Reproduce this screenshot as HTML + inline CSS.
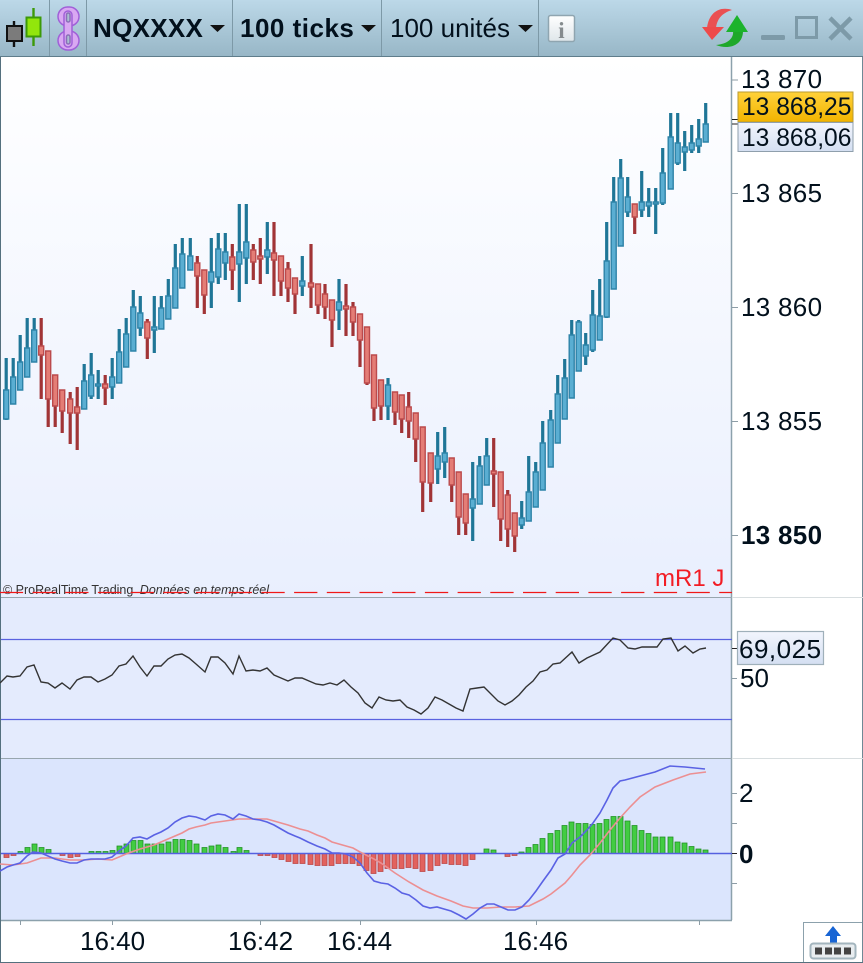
<!DOCTYPE html>
<html><head><meta charset="utf-8"><title>NQXXXX</title>
<style>
html,body{margin:0;padding:0;background:#fff;}
svg{display:block;}
text{font-family:"Liberation Sans",sans-serif;}
</style></head>
<body>
<svg xmlns="http://www.w3.org/2000/svg" width="863" height="963" viewBox="0 0 863 963">
<defs>
<linearGradient id="tb" x1="0" y1="0" x2="0" y2="1"><stop offset="0" stop-color="#bcd8e8"/><stop offset="1" stop-color="#98b7c7"/></linearGradient>
<linearGradient id="pc" x1="0" y1="0" x2="0" y2="1"><stop offset="0" stop-color="#ffffff"/><stop offset="1" stop-color="#e9effe"/></linearGradient>
<linearGradient id="ye" x1="0" y1="0" x2="0" y2="1"><stop offset="0" stop-color="#ffd23a"/><stop offset="1" stop-color="#f2b400"/></linearGradient>
<linearGradient id="bl" x1="0" y1="0" x2="0" y2="1"><stop offset="0" stop-color="#f2f5fd"/><stop offset="1" stop-color="#d4dff2"/></linearGradient>
<linearGradient id="in" x1="0" y1="0" x2="0" y2="1"><stop offset="0" stop-color="#ffffff"/><stop offset="1" stop-color="#dfe6ea"/></linearGradient>
</defs>
<rect width="863" height="963" fill="#fff"/>
<!-- chart panels -->
<rect x="1" y="57" width="731" height="540" fill="url(#pc)"/>
<rect x="1" y="597" width="731" height="162" fill="#e4ebfd"/>
<rect x="1" y="759" width="731" height="161" fill="#dbe5fd"/>
<!-- toolbar -->
<rect x="0" y="0" width="863" height="56" fill="url(#tb)"/>
<rect x="0" y="56" width="863" height="1" fill="#5f7d8b"/>
<path d="M49.5 0V56M86.5 0V56M232.5 0V56M381.5 0V56M538.5 0V56" stroke="#7d99a7" stroke-width="1"/>
<!-- candle icon -->
<path d="M14 21V47" stroke="#111" stroke-width="2.4"/>
<rect x="7" y="26" width="15" height="15" fill="#7b7b7b" stroke="#111" stroke-width="2"/>
<path d="M33.5 8V46" stroke="#3c9a08" stroke-width="2.4"/>
<rect x="26.5" y="17.5" width="14" height="19" fill="#92e60c" stroke="#3c9a08" stroke-width="2"/>
<!-- link icon -->
<g fill="none" stroke="#a060d8" stroke-width="1.5">
<rect x="58" y="7" width="21" height="19" rx="9.5" fill="#d9a8f2"/>
<rect x="58" y="31" width="21" height="19" rx="9.5" fill="#d9a8f2"/>
<rect x="64" y="11" width="8" height="36" rx="4" fill="#d9a8f2"/>
<rect x="66.5" y="13" width="3.5" height="9" rx="1.7" fill="#a9bfd0" stroke="#8a70b8"/>
<rect x="66.5" y="35" width="3.5" height="9" rx="1.7" fill="#a9bfd0" stroke="#8a70b8"/>
</g>
<!-- toolbar text -->
<text x="93" y="37" font-size="26" font-weight="bold" fill="#02101c" letter-spacing="0.3">NQXXXX</text>
<path d="M210 25h15l-7.5 7z" fill="#111"/>
<text x="240" y="37" font-size="26" font-weight="bold" fill="#02101c" letter-spacing="0.5">100 ticks</text>
<path d="M361 25h15l-7.5 7z" fill="#111"/>
<text x="390" y="37" font-size="26" fill="#02101c">100 unités</text>
<path d="M518 25h15l-7.5 7z" fill="#111"/>
<!-- info -->
<rect x="548.5" y="15.5" width="26" height="26" rx="2" fill="url(#in)" stroke="#8fa5b0" stroke-width="1.5"/>
<text x="561.5" y="38" font-size="23" font-weight="bold" text-anchor="middle" style="font-family:'Liberation Serif',serif" fill="#858b8e">i</text>
<!-- refresh -->
<path d="M732 10C720 6 709 12 707 28H716C717 19 722 13 732 10z" fill="#ea5052"/>
<path d="M702 27H724L712 40z" fill="#ee4a4a"/>
<path d="M716 45C728 50 743 46 743 31H733C734 38 728 44 716 45z" fill="#1ea82a"/>
<path d="M726 32H748L737 15z" fill="#1cb32c"/>
<!-- window controls -->
<rect x="761" y="35" width="24" height="5" rx="1.5" fill="#7d9aa8"/>
<rect x="796.5" y="17.5" width="20" height="20" fill="none" stroke="#7d9aa8" stroke-width="3"/>
<path d="M830 18L851 39M851 18L830 39" stroke="#7d9aa8" stroke-width="4.5"/>
<!-- window/panel lines -->
<path d="M0.5 57V963" stroke="#54707e" stroke-width="1"/>
<path d="M862.5 57V963" stroke="#6f8895" stroke-width="1"/>
<path d="M0 962.5H863" stroke="#54707e" stroke-width="1"/>
<path d="M731.5 57V920" stroke="#8ca1ac" stroke-width="1.5"/>
<path d="M1 597.5H732" stroke="#98a6ae" stroke-width="1"/>
<path d="M732 597.5H863" stroke="#d8dee0" stroke-width="1"/>
<path d="M1 758.5H732" stroke="#98a6ae" stroke-width="1"/>
<path d="M732 758.5H863" stroke="#d8dee0" stroke-width="1"/>
<path d="M1 920.5H732" stroke="#8ca1ac" stroke-width="1.5"/>
<!-- price axis ticks -->
<path d="M732 80H738M732 193.5H738M732 307.5H738M732 421.5H738M732 535.5H738M732 678.5H737M732 793.5H737M732 823.5H737M732 883.5H737" stroke="#8d9da6" stroke-width="1"/>
<path d="M732 119.5H738M732 124H738M732 648.5H737M732 853.5H737" stroke="#222" stroke-width="1"/>
<path d="M20.5 921V925M112.5 921V925M260.5 921V925M360.5 921V925M536.5 921V925M699.5 921V925" stroke="#8d9da6" stroke-width="1"/>
<!-- blue wicks -->
<path fill="none" stroke="#1f7697" stroke-width="3.2" d="M6.2 358V420M13.2 358V404M20.2 335V390M27.2 318V377M34.2 318V362M84.2 364V409M91.2 353V399M98.2 370V399M112.2 358V399M119.2 329V383M126.2 318V367M133.3 290V351M140.3 296V336M154.3 296V353M161.3 296V329M168.3 279V319M175.3 244V308M182.3 238V288M190.3 238V270M211.3 238V308M218.3 233V284M225.3 233V280M239.3 204V302M246.3 204V284M267.3 222V274M302.3 256V296M339 279V330M388 378V420M437.7 432V484M444.7 427V478M472.7 462V541M479.7 456V504M486.7 438V485M521.7 501V529M528.7 456V521M535.7 462V507M542.7 421V490M550.7 410V467M557.7 375V443M564.7 359V419M571.7 320V398M578.7 320V371M585.7 333V365M592.7 290V352M599.7 279V340M606.7 222V318M613.7 177V289M620.7 159V246M627.7 177V217M641.7 171V217M648.7 188V217M655.7 188V234M662.7 148V205M670.7 113V189M677.7 113V165M684.7 131V171M691.7 125V153M698.7 119V153M705.7 103V142"/>
<!-- red wicks -->
<path fill="none" stroke="#a13436" stroke-width="3.2" d="M41.2 318V399M48.2 351V427M55.2 375V427M62.2 390V433M70.2 392V444M77.2 387V450M105.2 375V405M147.3 319V359M197.3 256V308M204.3 270V314M232.3 244V290M253.3 244V280M260.3 238V284M274 222V296M281 256V296M288 262V302M295 278V314M311 244V308M318 284V314M325 284V319M332 300V347M346 284V336M353 302V336M360 314V367M367 327V385M374 355V421M381 380V420M395 392V425M401.7 395V433M408.7 392V438M415.7 413V462M422.7 427V512M430.7 453V502M451.7 458V502M458.7 472V535M465.7 494V535M493.7 438V507M500.7 472V541M507.7 490V547M514.7 513V552M634.7 204V234"/>
<!-- blue bodies -->
<g fill="#5aaed2" stroke="#2d83a8" stroke-width="1.4">
<path d="M3.7 390h5v29h-5zM10.7 377h5v27h-5zM17.7 362h5v28h-5zM24.7 348h5v29h-5zM31.7 330h5v32h-5zM81.7 381h5v28h-5zM88.7 375h5v21h-5zM95.7 384h5v2h-5zM109.7 377h5v10h-5zM116.7 352h5v31h-5zM123.7 334h5v33h-5zM130.8 307h5v44h-5zM137.8 313h5v15h-5zM151.8 327h5v3h-5zM158.8 308h5v21h-5zM165.8 296h5v23h-5zM172.8 268h5v40h-5zM179.8 254h5v34h-5zM187.8 256h5v14h-5zM208.8 272h5v10h-5zM215.8 249h5v28h-5zM222.8 252h5v11h-5zM236.8 252h5v12h-5zM243.8 242h5v16h-5zM264.8 250h5v7h-5zM299.8 281h5v5h-5zM336.5 302h5v8h-5zM385.5 385h5v21h-5zM435.2 456h5v13h-5zM442.2 453h5v9h-5zM470.2 499h5v9h-5zM477.2 466h5v38h-5zM484.2 456h5v29h-5zM519.2 518h5v7h-5zM526.2 492h5v29h-5zM533.2 472h5v35h-5zM540.2 443h5v47h-5zM548.2 420h5v47h-5zM555.2 394h5v49h-5zM562.2 378h5v41h-5zM569.2 335h5v63h-5zM576.2 322h5v49h-5zM583.2 345h5v11h-5zM590.2 315h5v35h-5zM597.2 316h5v24h-5zM604.2 261h5v56h-5zM611.2 202h5v87h-5zM618.2 178h5v68h-5zM625.2 197h5v15h-5zM639.2 202h5v8h-5zM646.2 202h5v4h-5zM653.2 202h5v2h-5zM660.2 173h5v30h-5zM668.2 137h5v52h-5zM675.2 143h5v20h-5zM682.2 147h5v5h-5zM689.2 143h5v7h-5zM696.2 139h5v7h-5zM703.2 124h5v18h-5z"/>
</g>
<!-- red bodies -->
<g fill="#e47d76" stroke="#bb4a4c" stroke-width="1.4">
<path d="M38.7 346h5v9h-5zM45.7 351h5v48h-5zM52.7 375h5v31h-5zM59.7 390h5v21h-5zM67.7 399h5v14h-5zM74.7 407h5v6h-5zM102.7 384h5v4h-5zM144.8 322h5v16h-5zM194.8 263h5v13h-5zM201.8 270h5v25h-5zM229.8 257h5v13h-5zM250.8 250h5v12h-5zM257.8 256h5v3h-5zM271.5 253h5v7h-5zM278.5 256h5v25h-5zM285.5 269h5v19h-5zM292.5 278h5v16h-5zM308.5 283h5v4h-5zM315.5 284h5v21h-5zM322.5 294h5v13h-5zM329.5 300h5v20h-5zM343.5 306h5v3h-5zM350.5 307h5v15h-5zM357.5 314h5v26h-5zM364.5 327h5v56h-5zM371.5 355h5v53h-5zM378.5 380h5v26h-5zM392.5 392h5v20h-5zM399.2 395h5v24h-5zM406.2 407h5v14h-5zM413.2 413h5v26h-5zM420.2 427h5v55h-5zM428.2 453h5v30h-5zM449.2 458h5v27h-5zM456.2 472h5v45h-5zM463.2 494h5v29h-5zM491.2 471h5v3h-5zM498.2 472h5v47h-5zM505.2 495h5v34h-5zM512.2 513h5v23h-5zM632.2 204h5v13h-5z"/>
</g>
<!-- mR1 line and copyright -->
<text x="3" y="594" font-size="12.5" fill="#333">© ProRealTime Trading <tspan font-style="italic" dx="3">Données en temps réel</tspan></text>
<path d="M0 592.5H732" stroke="#f01818" stroke-width="1.2" stroke-dasharray="23.3 9.4" stroke-dashoffset="0.2"/>
<text x="655" y="586" font-size="24" fill="#f21c24">mR1 J</text>
<!-- RSI -->
<path d="M1 639.5H732M1 719.5H732" stroke="#5a62e0" stroke-width="1.2"/>
<path fill="none" stroke="#333" stroke-width="1.4" d="M0 683L7 676L13 677L20 676L27 667L34 665L41 682L48 683L55 688L62 683L70 689L77 680L84 677L91 677L98 682L105 679L112 675L119 666L126 664L133 656L140 667L147 676L154 666L161 666L168 659L175 655L182 654L189 658L196 664L205 672L211 657L218 657L225 663L233 674L239 656L246 671L253 670L260 671L267 668L274 675L281 678L288 681L295 678L302 678L309 681L316 684L323 685L330 683L337 685L344 680L351 687L358 693L365 703L372 708L379 697L386 700L393 701L400 700L407 707L414 710L421 714L428 708L435 697L442 700L449 704L456 708L463 711L470 689L477 688L484 687L491 694L498 701L505 705L512 701L519 695L526 687L533 681L540 672L547 670L553 664L560 663L572 652L579 663L587 658L600 652L613 638L620 640L628 648L635 649L642 647L657 647L663 639L671 638L678 651L685 646L693 653L700 649L706 648"/>
<!-- MACD histogram -->
<g fill="#42cc42" stroke="#1f8f22" stroke-width="0.8">
<path d="M18 851.5h5v2h-5zM25 847.5h5v6h-5zM32 844h5v9.5h-5zM39 847.5h5v6h-5zM46 849.5h5v4h-5zM89 851.5h5v2h-5zM96 851.5h5v2h-5zM103 851.5h5v2h-5zM110 850.5h5v3h-5zM117 846h5v7.5h-5zM124 844h5v9.5h-5zM131 840.5h5v13h-5zM138 840.5h5v13h-5zM145 844h5v9.5h-5zM152 844h5v9.5h-5zM159 844h5v9.5h-5zM166 842h5v11.5h-5zM173 839.5h5v14h-5zM180 839.5h5v14h-5zM187 840.5h5v13h-5zM194 844h5v9.5h-5zM202 847.5h5v6h-5zM209 846h5v7.5h-5zM216 845h5v8.5h-5zM223 847.5h5v6h-5zM231 851.5h5v2h-5zM237 847.5h5v6h-5zM244 850.5h5v3h-5zM484 849h5v4.5h-5zM491 850h5v3.5h-5zM519 852h5v1.5h-5zM526 847.5h5v6h-5zM533 844.5h5v9h-5zM540 838.5h5v15h-5zM548 833.5h5v20h-5zM555 830.5h5v23h-5zM562 825.5h5v28h-5zM569 822h5v31.5h-5zM576 823.5h5v30h-5zM583 823.5h5v30h-5zM590 824.5h5v29h-5zM597 823.5h5v30h-5zM604 819.5h5v34h-5zM611 816.5h5v37h-5zM618 816.5h5v37h-5zM625 821h5v32.5h-5zM632 825.5h5v28h-5zM639 830.5h5v23h-5zM646 833.5h5v20h-5zM653 837h5v16.5h-5zM660 837h5v16.5h-5zM668 837h5v16.5h-5zM675 842h5v11.5h-5zM682 843h5v10.5h-5zM689 846.5h5v7h-5zM696 849h5v4.5h-5zM703 850h5v3.5h-5z"/>
</g>
<g fill="#e2625e" stroke="#bb4444" stroke-width="0.8">
<path d="M4 853.5h5v4h-5zM11 853.5h5v2h-5zM60 853.5h5v2h-5zM68 853.5h5v4h-5zM75 853.5h5v3h-5zM258 853.5h5v2h-5zM265 853.5h5v2h-5zM272 853.5h5v4h-5zM279 853.5h5v6h-5zM286 853.5h5v8h-5zM293 853.5h5v10h-5zM300 853.5h5v10h-5zM308 853.5h5v11h-5zM315 853.5h5v12h-5zM322 853.5h5v12h-5zM329 853.5h5v12h-5zM336 853.5h5v10h-5zM343 853.5h5v10h-5zM350 853.5h5v10h-5zM357 853.5h5v12h-5zM364 853.5h5v17h-5zM371 853.5h5v20h-5zM378 853.5h5v18h-5zM385 853.5h5v15h-5zM392 853.5h5v15h-5zM399 853.5h5v15h-5zM406 853.5h5v14h-5zM413 853.5h5v15h-5zM420 853.5h5v18h-5zM428 853.5h5v17h-5zM435 853.5h5v12h-5zM442 853.5h5v10h-5zM449 853.5h5v11h-5zM456 853.5h5v11h-5zM463 853.5h5v12h-5zM470 853.5h5v6h-5zM505 853.5h5v3h-5zM512 853.5h5v2h-5z"/>
</g>
<path d="M1 853.5H732" stroke="#5560e0" stroke-width="1.4"/>
<!-- MACD signal -->
<path fill="none" stroke="#ec8f92" stroke-width="1.6" d="M0 864L13 865L20 864L27 863L41 858L55 858L62 859L70 860L84 860L98 859L112 860L119 857L126 854L140 849L154 845L168 839L182 833L189 829L196 827L205 825L211 823L225 821L239 819L253 819L267 819L274 821L288 825L300 829L308 831L317 835L325 838L332 842L346 846L353 848L360 852L374 859L381 863L395 873L409 882L423 890L437 896L451 901L463 906L473 908L487 908L501 907L515 907L529 906L543 899L551 894L565 883L572 875L580 865L590 855L600 843L610 830L620 818L630 807L640 797L655 787L673 780L690 774L706 772"/>
<!-- MACD line -->
<path fill="none" stroke="#5a62e4" stroke-width="1.6" d="M0 871L7 867L13 865L20 863L27 856L33 852L41 853L48 856L55 859L62 861L70 863L77 863L84 860L91 859L98 859L105 859L112 857L119 851L126 846L133 838L140 837L147 839L154 835L161 832L168 828L175 822L182 818L189 816L196 817L205 820L211 816L218 814L225 815L233 819L239 814L246 816L253 819L260 820L267 822L274 825L281 829L288 833L295 836L300 838L308 842L317 846L325 849L332 853L339 853L346 854L353 857L360 863L367 873L374 881L381 883L388 884L395 888L402 893L409 895L416 900L423 906L430 908L437 907L444 909L451 911L459 915L466 919L473 914L480 908L487 904L494 904L501 907L508 910L515 910L522 907L529 900L536 891L543 881L551 870L558 858L565 854L572 843L580 837L587 830L593 823L600 813L607 800L613 788L620 781L625 780L640 776L655 772L670 766L685 767L705 769"/>
<!-- price labels -->
<text x="741" y="88" font-size="26" fill="#02101c" letter-spacing="0.3">13 870</text>
<text x="741" y="202" font-size="26" fill="#02101c" letter-spacing="0.3">13 865</text>
<text x="741" y="316" font-size="26" fill="#02101c" letter-spacing="0.3">13 860</text>
<text x="741" y="430" font-size="26" fill="#02101c" letter-spacing="0.3">13 855</text>
<text x="741" y="544" font-size="26" font-weight="bold" fill="#02101c" letter-spacing="0.3">13 850</text>
<rect x="738" y="92" width="115" height="30" fill="url(#ye)" stroke="#b89a30" stroke-width="1"/>
<text x="742" y="115" font-size="24.6" fill="#02101c">13 868,25</text>
<rect x="738" y="122.5" width="115" height="29" fill="url(#bl)" stroke="#8f9fac" stroke-width="1"/>
<text x="742" y="146" font-size="24.6" fill="#02101c">13 868,06</text>
<rect x="737.5" y="631.5" width="86" height="33" fill="url(#bl)" stroke="#9fb0ba" stroke-width="1.2"/>
<text x="739" y="658" font-size="26" fill="#02101c" letter-spacing="0.5">69,025</text>
<text x="740" y="687" font-size="26" fill="#02101c">50</text>
<text x="739" y="802" font-size="26" fill="#02101c">2</text>
<text x="739" y="863" font-size="26" font-weight="bold" fill="#02101c">0</text>
<!-- time labels -->
<text x="80" y="950" font-size="26" fill="#02101c">16:40</text>
<text x="228" y="950" font-size="26" fill="#02101c">16:42</text>
<text x="327" y="950" font-size="26" fill="#02101c">16:44</text>
<text x="503" y="950" font-size="26" fill="#02101c">16:46</text>
<!-- bottom-right button -->
<path d="M803.5 962V922.5H862" fill="#fff" stroke="#8ca1ac" stroke-width="1"/>
<path d="M833 926L825 936H830V943H837V936H841z" fill="#1764d4"/>
<rect x="810.5" y="943.5" width="45" height="15" rx="3" fill="#e8edf0" stroke="#a3b5be" stroke-width="2"/>
<path d="M815 947.5h7v7h-7zM825 947.5h7v7h-7zM834 947.5h7v7h-7zM844 947.5h7v7h-7z" fill="#444"/>
</svg>
</body></html>
